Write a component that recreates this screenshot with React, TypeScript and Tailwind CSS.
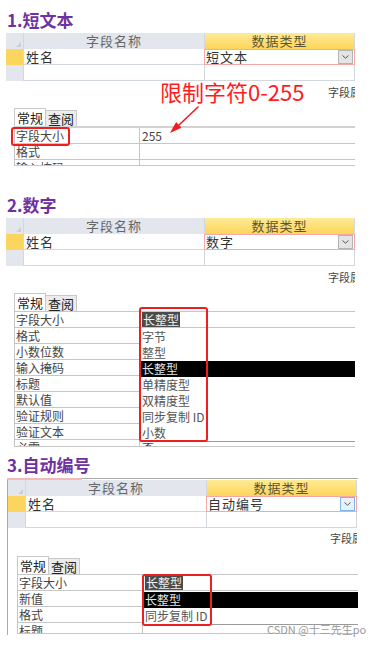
import type { ReactNode } from "react";

const LINE = "border-[#d3d8df]";

function DropButton({ active }: { active?: boolean }) {
  return (
    <div
      className={`mr-[1px] flex h-[14px] w-[15px] items-center justify-center border ${
        active ? "border-[#7eb4ea] bg-[#e5f1fb]" : "border-[#b4b4b4] bg-[#e4e4e4]"
      }`}
    >
      <svg width="7" height="4" viewBox="0 0 7 4">
        <path d="M0.5 0.5L3.5 3.2L6.5 0.5" fill="none" stroke="#555" strokeWidth="1" />
      </svg>
    </div>
  );
}

function FieldTable({ type, active }: { type: string; active?: boolean }) {
  return (
    <div className="flex w-[349px] flex-col text-[13px] leading-[16px] tracking-[1px] text-[#333]">
      <div className="flex h-[16px]">
        <div className="relative w-[17px] bg-[#e3e7ed]">
          <svg className="absolute right-[2px] bottom-[2px]" width="5" height="5" viewBox="0 0 5 5">
            <path d="M5 0V5H0Z" fill="#cbd0d8" />
          </svg>
        </div>
        <div className={`w-[181px] border-l ${LINE} bg-[#e3e7ed] text-center text-[#666]`}>字段名称</div>
        <div className={`w-[151px] border-x ${LINE} bg-gradient-to-b from-[#feeb94] to-[#fcd558] text-center text-[#5f5530]`}>
          数据类型
        </div>
      </div>
      <div className="flex h-[16px]">
        <div className="w-[17px] bg-[#fcd55f]" />
        <div className={`w-[181px] border-b border-l ${LINE} bg-white pl-[2px]`}>姓名</div>
        <div className="flex w-[151px] items-center border border-[#f5a8a8] bg-white pl-[1px]">
          <span className="flex-1">{type}</span>
          <DropButton active={active} />
        </div>
      </div>
      <div className="flex h-[16px]">
        <div className="w-[17px] bg-[#e3e7ed]" />
        <div className={`w-[181px] border-b border-l ${LINE} bg-white`} />
        <div className={`w-[151px] border-x border-b ${LINE} bg-white`} />
      </div>
    </div>
  );
}

function PropsCaption({ h, pt }: { h: string; pt: string }) {
  return (
    <div className={`${h} w-[349px] overflow-hidden`}>
      <div className={`${pt} pl-[322px] text-[11px] leading-[14px] whitespace-nowrap text-[#444]`}>字段属性</div>
    </div>
  );
}

function Tabs({ h, pl }: { h: string; pl: string }) {
  return (
    <div className={`flex ${h} items-end ${pl} text-[13px] leading-[16px] text-[#222]`}>
      <div className="h-[18px] border border-b-0 border-[#c8c8c8] bg-white px-[2px] pt-[1px]">常规</div>
      <div className="h-[16px] border border-b-0 border-l-0 border-[#c8c8c8] bg-[#ececec] px-[2px]">查阅</div>
    </div>
  );
}

function PropRow({ label, value, h = "h-[16px]" }: { label: string; value?: ReactNode; h?: string }) {
  return (
    <div className={`flex ${h} overflow-hidden border-b border-[#c6c6c6] text-[12px] leading-[15px] text-[#444]`}>
      <div className="w-[126px] shrink-0 border-r border-l border-[#c6c6c6] pl-[1px]">{label}</div>
      <div className="flex-1 pl-[2px]">{value}</div>
    </div>
  );
}

function Chip({ children }: { children: ReactNode }) {
  return <span className="bg-[#4b4b4b] px-[1px] text-[#f2f2f2]">{children}</span>;
}

function DropList({ items, hot }: { items: string[]; hot: number }) {
  return (
    <div className="absolute top-[17px] right-0 left-[126px] flex flex-col border-b border-[#9a9a9a] bg-white text-[12px] leading-[16px] text-[#555]">
      {items.map((t, i) => (
        <div key={t + i} className={`h-[16px] pl-[2px] ${i === hot ? "bg-black text-[#e6e6e6]" : ""}`}>
          {t}
        </div>
      ))}
    </div>
  );
}

function RedBox({ className }: { className: string }) {
  return <div className={`pointer-events-none absolute rounded-[3px] border-2 border-[#f01e1e] ${className}`} />;
}

function Title({ children, className }: { children: ReactNode; className: string }) {
  return (
    <div className={`${className} pl-[7px] text-[17px] leading-[20px] font-bold text-[#7030a0]`}>{children}</div>
  );
}

export default function App() {
  return (
    <div className="relative h-[645px] w-[377px] overflow-hidden bg-white font-['Noto_Sans_CJK_SC',sans-serif]">
      {/* 1 */}
      <Title className="h-[33px] pt-[10px]">1.短文本</Title>
      <div className="ml-[6px]">
        <FieldTable type="短文本" />
        <PropsCaption h="h-[25px]" pt="pt-[4px]" />
      </div>
      <Tabs h="h-[20px]" pl="pl-[14px]" />
      <div className="relative ml-[14px] w-[341px] border-t-2 border-[#d2d2d2]">
        <PropRow label="字段大小" value="255" />
        <PropRow label="格式" />
        <PropRow label="输入掩码" h="h-[6px]" />
        <RedBox className="top-[-1px] left-[-3px] h-[19px] w-[59px]" />
      </div>

      {/* 2 */}
      <Title className="h-[52px] pt-[29px]">2.数字</Title>
      <div className="ml-[6px]">
        <FieldTable type="数字" />
        <PropsCaption h="h-[27px]" pt="pt-[4px]" />
      </div>
      <Tabs h="h-[18px]" pl="pl-[14px]" />
      <div className="relative ml-[14px] w-[341px] border-t border-[#c6c6c6]">
        <PropRow label="字段大小" value={<Chip>长整型</Chip>} />
        <PropRow label="格式" />
        <PropRow label="小数位数" />
        <PropRow label="输入掩码" />
        <PropRow label="标题" />
        <PropRow label="默认值" />
        <PropRow label="验证规则" />
        <PropRow label="验证文本" />
        <PropRow label="必需" value="否" h="h-[7px]" />
        <DropList items={["字节", "整型", "长整型", "单精度型", "双精度型", "同步复制 ID", "小数"]} hot={2} />
        <RedBox className="top-[-5px] left-[125px] h-[135px] w-[69px]" />
      </div>

      {/* 3 */}
      <Title className="h-[31px] pt-[8px]">3.自动编号</Title>
      <div className="relative ml-[7px] h-[157px] w-[351px] border-t border-l border-[#a9a9a9] pt-[1px]">
        <div className="absolute top-[-1px] left-[-1px] h-[2px] w-[75px] bg-[#f5b8b8]" />
        <FieldTable type="自动编号" active />
        <PropsCaption h="h-[27px]" pt="pt-[3px]" />
        <Tabs h="h-[19px]" pl="pl-[9px]" />
        <div className="relative ml-[9px] w-[341px] border-t border-[#c6c6c6]">
          <PropRow label="字段大小" value={<Chip>长整型</Chip>} />
          <PropRow label="新值" />
          <PropRow label="格式" />
          <PropRow label="标题" h="h-[11px]" />
          <DropList items={["长整型", "同步复制 ID"]} hot={0} />
          <RedBox className="top-[-1px] left-[125px] h-[52px] w-[70px]" />
        </div>
      </div>

      {/* annotations */}
      <div className="absolute top-[78px] left-[160px] text-[22px] leading-[26px] whitespace-nowrap text-[#ff1c1c]">
        限制字符0-255
      </div>
      <svg className="absolute top-[100px] left-[160px]" width="45" height="40" viewBox="0 0 45 40">
        <path d="M38 7L19 25" stroke="#f01e1e" strokeWidth="1.6" strokeLinecap="round" />
        <path d="M10 33L21.5 27.7L16.1 21.9Z" fill="#f01e1e" />
      </svg>
      <div className="absolute top-[622px] left-[267px] text-[11px] leading-[14px] whitespace-nowrap text-[#9a9a9a]">
        CSDN @十三先生po
      </div>
    </div>
  );
}
